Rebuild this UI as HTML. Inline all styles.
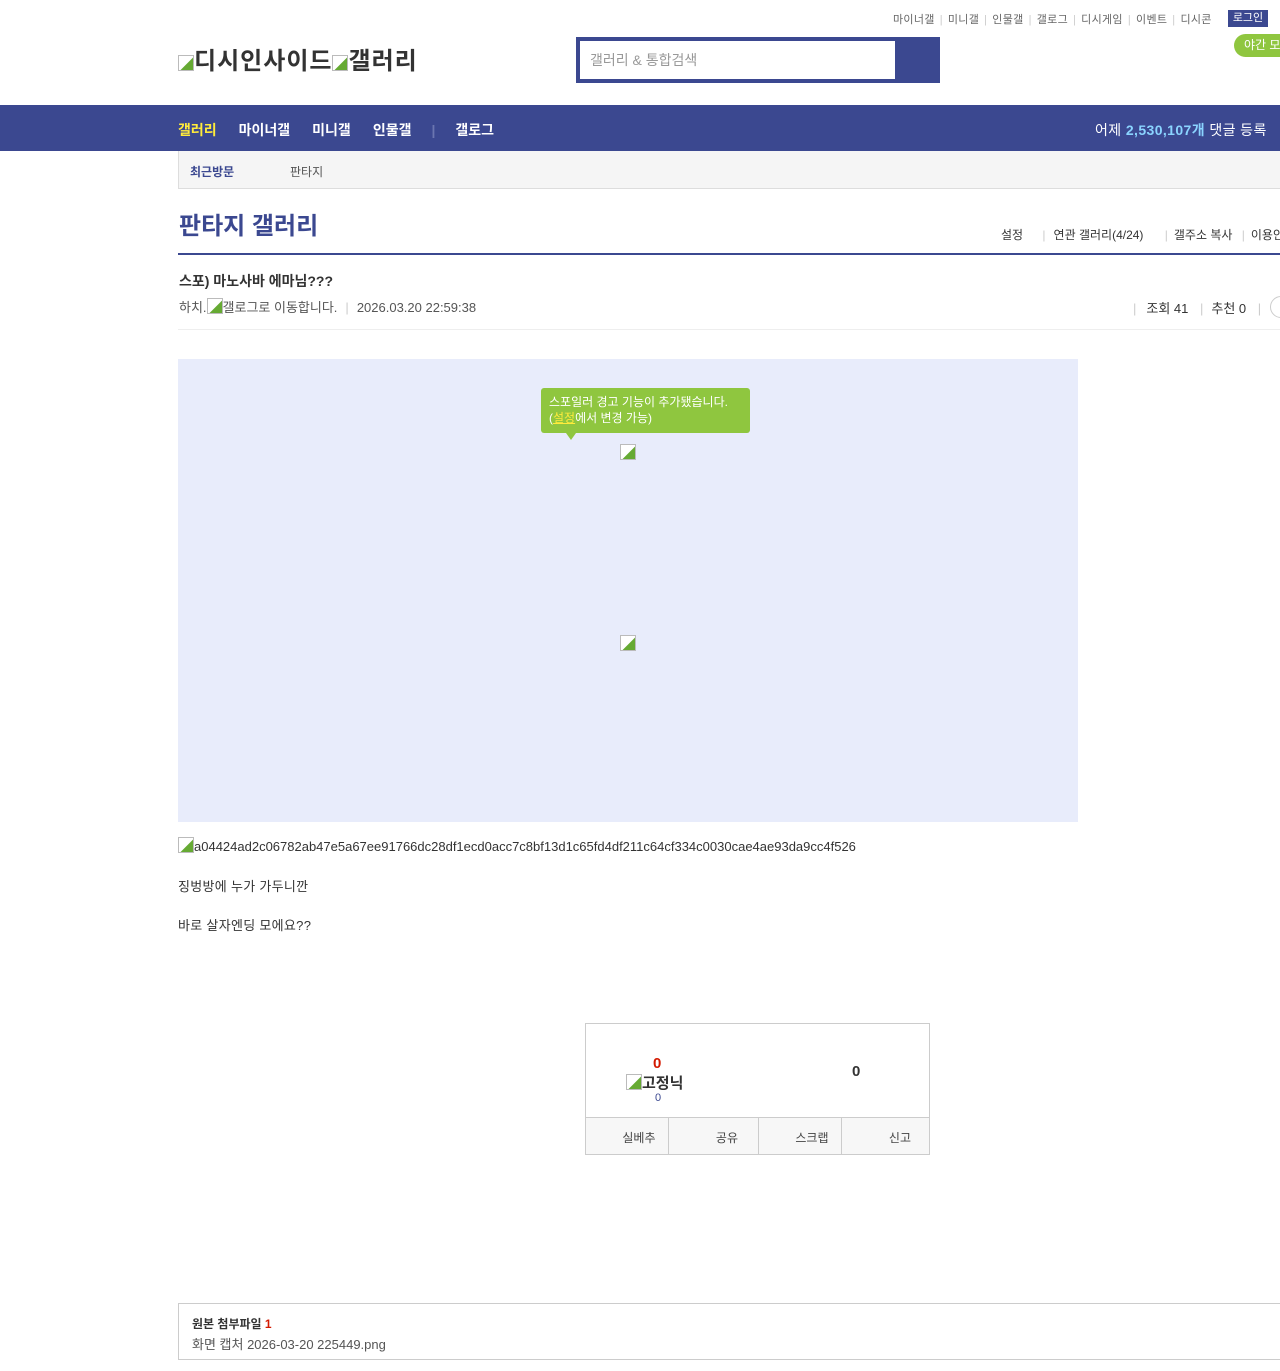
<!DOCTYPE html>
<html><head><meta charset="utf-8"><style>
*{margin:0;padding:0;box-sizing:border-box}
body{width:1280px;height:1371px;background:#fff;font-family:"Liberation Sans","Noto Sans CJK KR",sans-serif;color:#333;position:relative;overflow:hidden}
.a{position:absolute;white-space:nowrap}
.top{font-size:11px;color:#666}
.top span.s{color:#ccc;margin:0 5px}
.bi{display:inline-block;width:16px;height:16px;border:1px solid #bbb;background:linear-gradient(135deg,#fff 55%,#6a3 56%);vertical-align:-2px}
</style></head><body>
<div class="a top" style="left:893px;top:11px;letter-spacing:0.3px">마이너갤<span class="s">|</span>미니갤<span class="s">|</span>인물갤<span class="s">|</span>갤로그<span class="s">|</span>디시게임<span class="s">|</span>이벤트<span class="s">|</span>디시콘</div>
<div class="a" style="left:1228px;top:10px;width:40px;height:17px;background:#3b4890;color:#fff;font-size:11px;text-align:center;line-height:17px">로그인</div>
<div class="a" style="left:1234px;top:34px;width:60px;height:23px;background:#8fc63f;border-radius:12px;color:#fff;font-size:12px;line-height:23px;padding-left:10px">야간 모드</div>
<div class="a" style="left:178px;top:41px;font-size:24px;font-weight:bold;color:#333;letter-spacing:1px"><span class="bi"></span>디시인사이드<span class="bi"></span>갤러리</div>
<div class="a" style="left:576px;top:37px;width:364px;height:46px;background:#3b4890"></div>
<div class="a" style="left:580px;top:41px;width:315px;height:38px;background:#fff;font-size:14px;color:#999;line-height:38px;padding-left:10px">갤러리 &amp; 통합검색</div>
<div class="a" style="left:0;top:105px;width:1280px;height:46px;background:#3b4890"></div>
<div class="a" style="left:178px;top:120px;font-size:14px;font-weight:bold;color:#fff"><span style="color:#ffeb3b">갤러리</span><span style="margin-left:22px">마이너갤</span><span style="margin-left:22px">미니갤</span><span style="margin-left:22px">인물갤</span><span style="color:#6b76b0;margin:0 20px">|</span>갤로그</div>
<div class="a" style="left:1095px;top:120px;font-size:14px;color:#fff;letter-spacing:0.4px">어제 <b style="color:#8ad4ff">2,530,107개</b> 댓글 등록</div>
<div class="a" style="left:178px;top:151px;width:1110px;height:38px;background:#f5f5f5;border:1px solid #ddd;border-top:none"></div>
<div class="a" style="left:190px;top:163px;font-size:12px;font-weight:bold;color:#3b4890">최근방문</div>
<div class="a" style="left:290px;top:163px;font-size:12px;color:#555">판타지</div>
<div class="a" style="left:179px;top:206px;font-size:24px;font-weight:bold;color:#3b4890">판타지 갤러리</div>
<div class="a" style="left:1001px;top:226px;font-size:12px;color:#333">설정 <span style="color:#ccc;margin:0 8px 0 16px">|</span>연관 갤러리(4/24) <span style="color:#ccc;margin:0 6px 0 18px">|</span>갤주소 복사 <span style="color:#ccc;margin:0 6px">|</span>이용안내</div>
<div class="a" style="left:178px;top:253px;width:1110px;height:2px;background:#3b4890"></div>
<div class="a" style="left:179px;top:271px;font-size:14px;font-weight:bold;color:#333">스포) 마노사바 에마님???</div>
<div class="a" style="left:179px;top:297px;font-size:13px;color:#555">하치.<span class="bi"></span>갤로그로 이동합니다.<span style="color:#ccc;margin:0 8px">|</span>2026.03.20 22:59:38</div>
<div class="a" style="left:1133px;top:298px;font-size:13px;color:#333"><span style="color:#ccc;margin-right:10px">|</span>조회 41 <span style="color:#ccc;margin:0 8px">|</span>추천 0 <span style="color:#ccc;margin:0 8px">|</span></div>
<div class="a" style="left:1270px;top:296px;width:22px;height:22px;border:1px solid #ccc;border-radius:11px"></div>
<div class="a" style="left:178px;top:329px;width:1110px;height:1px;background:#eee"></div>
<div class="a" style="left:178px;top:359px;width:900px;height:463px;background:#e8ecfb"></div>
<div class="a" style="left:541px;top:388px;width:209px;height:45px;background:#8fc63f;border-radius:3px;color:#fff;font-size:12px;line-height:16px;padding:6px 8px">스포일러 경고 기능이 추가됐습니다.<br>(<u style="color:#ffeb3b">설정</u>에서 변경 가능)</div>
<div class="a" style="left:566px;top:433px;width:0;height:0;border-left:5px solid transparent;border-right:5px solid transparent;border-top:7px solid #8fc63f"></div>
<div class="a" style="left:620px;top:444px"><span class="bi"></span></div>
<div class="a" style="left:620px;top:635px"><span class="bi"></span></div>
<div class="a" style="left:178px;top:837px;font-size:13px;color:#333"><span class="bi"></span>a04424ad2c06782ab47e5a67ee91766dc28df1ecd0acc7c8bf13d1c65fd4df211c64cf334c0030cae4ae93da9cc4f526</div>
<div class="a" style="left:178px;top:876px;font-size:13px;color:#333;letter-spacing:0.3px">징벙방에 누가 가두니깐</div>
<div class="a" style="left:178px;top:915px;font-size:13px;color:#333;letter-spacing:0.3px">바로 살자엔딩 모에요??</div>
<div class="a" style="left:585px;top:1023px;width:345px;height:132px;border:1px solid #ccc"></div>
<div class="a" style="left:653px;top:1055px;font-size:15px;font-weight:bold;color:#d31900">0</div>
<div class="a" style="left:626px;top:1072px;font-size:15px;font-weight:bold;color:#333"><span class="bi"></span>고정닉</div>
<div class="a" style="left:655px;top:1092px;font-size:11px;color:#3b4890">0</div>
<div class="a" style="left:852px;top:1063px;font-size:15px;font-weight:bold;color:#333">0</div>
<div class="a" style="left:586px;top:1117px;width:343px;height:37px;background:#f7f7f7;border-top:1px solid #ccc;display:flex;font-size:12px;color:#444">
<div style="flex:1;border-right:1px solid #ccc;text-align:right;padding:11px 12px 0 0">실베추</div>
<div style="flex:1;border-right:1px solid #ccc;text-align:right;padding:11px 20px 0 0">공유</div>
<div style="flex:1;border-right:1px solid #ccc;text-align:right;padding:11px 12px 0 0">스크랩</div>
<div style="flex:1;text-align:right;padding:11px 18px 0 0">신고</div></div>
<div class="a" style="left:178px;top:1303px;width:1110px;height:57px;border:1px solid #ccc"></div>
<div class="a" style="left:192px;top:1315px;font-size:12px;font-weight:bold;color:#333">원본 첨부파일 <span style="color:#d31900">1</span></div>
<div class="a" style="left:192px;top:1334px;font-size:13px;color:#555">화면 캡처 2026-03-20 225449.png</div>
</body></html>
